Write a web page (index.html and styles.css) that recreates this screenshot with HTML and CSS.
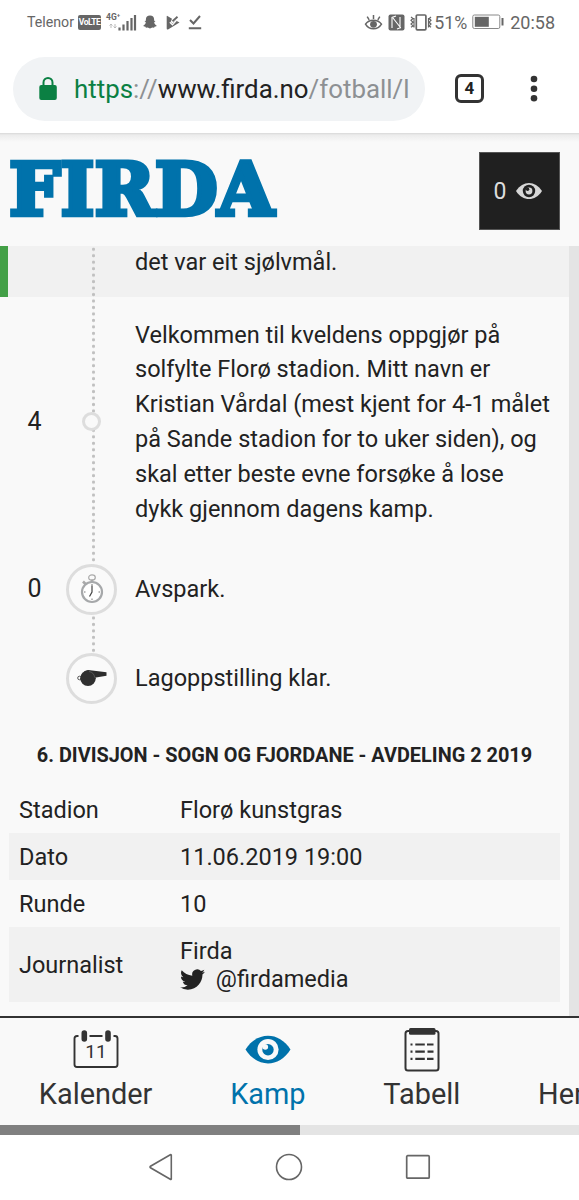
FILE: index.html
```html
<!DOCTYPE html>
<html lang="no">
<head>
    <meta charset="UTF-8">
    <meta name="viewport" content="width=device-width, initial-scale=1.0">
    <title>Firda - Kamp</title>
    <link rel="stylesheet" href="styles.css">
</head>
<body>
    <div class="status-bar">
        <span class="carrier">Telenor</span>
        <span class="volte">VoLTE</span>
        <svg class="signal" width="32" height="20" viewBox="0 0 32 20">
            <text x="0" y="8" class="net">4G⁺</text>
            <path d="M5 12v4M3.500 13.500L5 12l1.500 1.500M9 12v4M7.500 14.500L9 16l1.500-1.500" stroke="#bbb" fill="none"/>
            <path d="M13.500 15.500v3M17.500 12.500v6M21.500 9v9.500M25.500 6v12.500M29 3v15.500" stroke="#666" stroke-width="2.200" fill="none"/>
        </svg>
        <svg class="snap" width="14" height="14" viewBox="0 0 14 14">
            <path fill="#666" d="M7 .5c-2.600 0-4.100 1.700-4.100 3.700v1.600l-1.400.3 1.300 1.200C2.600 9 1.600 10 .4 10.400l.2.900 1.900.4.400 1 1.800-.1L7 13.600l2.300-1 1.800.1.400-1 1.900-.4.200-.9c-1.200-.4-2.200-1.400-2.400-3.100l1.300-1.200-1.400-.3V4.200C11.100 2.200 9.600.500 7 .5z"/>
        </svg>
        <svg class="play" width="14" height="15" viewBox="0 0 14 15">
            <path fill="#666" d="M1 .8l5 3-1.300 3.200 1.900 1.500L9.800 5.400 13.500 7.500 2 14.400c-.8.300-1.300 0-1.300-.8L.7 1.300z"/>
            <path d="M3.800 7.200l2.700 2.600 4-4.500" fill="none" stroke="#fff" stroke-width="1.200"/>
            <path d="M6.500 6.200L11.500 1.800" stroke="#666" stroke-width="1.800"/>
        </svg>
        <svg class="done" width="14" height="16" viewBox="0 0 14 16">
            <path d="M2 6l3.500 3.500L12 2M.8 14.300h12.400" fill="none" stroke="#666" stroke-width="2"/>
        </svg>
        <div class="status-right">
            <svg width="19" height="17" viewBox="0 0 19 17">
                <path d="M1.500 10.200C5 4.800 13.800 4.800 17.500 10.200 13.800 16.300 5 16.300 1.500 10.200z" fill="none" stroke="#666" stroke-width="1.500"/>
                <circle cx="9.500" cy="10.300" r="3.400" fill="#666"/>
                <path d="M9.500 1v4M3.200 2.600l2 3.200M15.800 2.600l-2 3.200" stroke="#666" stroke-width="1.500"/>
            </svg>
            <svg class="nfc" width="17" height="17" viewBox="0 0 17 17">
                <rect x=".5" y=".6" width="16" height="15.800" rx="2" fill="#666"/>
                <path d="M4 14V3.500L8 2M5 4l7 9V3M9 15l4-1.500" fill="none" stroke="#fff" stroke-width="1.100"/>
            </svg>
            <svg class="vibrate" width="22" height="17" viewBox="0 0 22 17">
                <rect x="6.300" y="1" width="9.600" height="14.800" rx="1" fill="none" stroke="#666" stroke-width="1.700"/>
                <path d="M1 3l2 1.500-2 1.800 2 1.900-2 1.800 2 1.900-2 1.400M4 4v9.500M18.500 4v9.500M21 3l-1.800 1.500L21 6.300l-1.800 1.900L21 10l-1.800 1.900L21 13.300" fill="none" stroke="#666" stroke-width="1.200"/>
            </svg>
            <span class="percent">51%</span>
            <svg class="battery" width="32" height="16" viewBox="0 0 32 16">
                <rect x=".8" y="1" width="27" height="13.500" rx="1.500" fill="none" stroke="#888"/>
                <rect x="2.800" y="2.800" width="14" height="10" fill="#666"/>
                <path d="M30.500 4v7.500" stroke="#666" stroke-width="2"/>
            </svg>
            <span class="clock">20:58</span>
        </div>
    </div>

    <div class="browser-bar">
        <div class="address">
            <svg width="20" height="24" viewBox="0 0 20 24">
                <rect x="1.300" y="8" width="17.500" height="15" rx="2" fill="#0b8043"/>
                <path d="M5.500 9V5.500a4.500 4.500 0 0 1 9 0V9" fill="none" stroke="#0b8043" stroke-width="2"/>
            </svg>
            <span class="url"><span class="scheme">https</span>://<span class="host">www.firda.no</span>/fotball/l</span>
        </div>
        <div class="tab-count">4</div>
        <svg class="menu" width="10" height="28" viewBox="0 0 10 28">
            <g fill="#333"><circle cx="5" cy="4" r="3.300"/><circle cx="5" cy="13.700" r="3.300"/><circle cx="5" cy="23.300" r="3.300"/></g>
        </svg>
    </div>

    <header class="site-header">
        <svg class="logo" width="270" height="64" viewBox="0 0 270 64">
            <text x="0" y="58" textLength="265" lengthAdjust="spacingAndGlyphs">FIRDA</text>
        </svg>
        <div class="watch">
            <span>0</span>
            <svg width="26" height="18" viewBox="0 0 46 30">
                <path fill="#d6d6d6" d="M0 15C12-4 34-4 46 15 34 34 12 34 0 15z"/>
                <circle cx="23" cy="15" r="11" fill="#202020"/>
                <circle cx="23" cy="15" r="6" fill="#d6d6d6"/>
                <circle cx="20.500" cy="12" r="3" fill="#202020"/>
            </svg>
        </div>
    </header>

    <main class="content">
        <div class="timeline">
            <div class="event highlight">
                <p>det var eit sjølvmål.</p>
            </div>
            <div class="event comment">
                <span class="minute">4</span>
                <span class="marker"><i class="dot"></i></span>
                <p>Velkommen til kveldens oppgjør på<br>solfylte Florø stadion. Mitt navn er<br>Kristian Vårdal (mest kjent for 4-1 målet<br>på Sande stadion for to uker siden), og<br>skal etter beste evne forsøke å lose<br>dykk gjennom dagens kamp.</p>
            </div>
            <div class="event kickoff">
                <span class="minute">0</span>
                <span class="marker"><i class="ring">
                    <svg width="28" height="34" viewBox="0 0 28 34">
                        <ellipse cx="14" cy="5.500" rx="3.300" ry="2.700" fill="none" stroke="#aaa" stroke-width="1.200"/>
                        <path d="M14 7.500V11M5 9.500l3 3" stroke="#aaa" stroke-width="2.600"/>
                        <circle cx="14" cy="20" r="10" fill="#fff" stroke="#a6a8aa" stroke-width="2.200"/>
                        <path d="M14 12v1.500M14 26.500V28M6 20h1.500M20.500 20H22" stroke="#777"/>
                        <path d="M14 13.500V20l-2.500 4.500" fill="none" stroke="#444" stroke-width="1.200"/>
                    </svg>
                </i></span>
                <p>Avspark.</p>
            </div>
            <div class="event lineup">
                <span class="minute"></span>
                <span class="marker"><i class="ring">
                    <svg width="32" height="20" viewBox="0 0 32 20">
                        <circle cx="3.500" cy="10" r="1.800" fill="none" stroke="#555"/>
                        <path d="M8 3.500l2.500-1L12 2l18.500 2.200v3.600L20 9.500 17 9z" fill="#2d2d2d"/>
                        <circle cx="12" cy="10.200" r="7.800" fill="#303030"/>
                        <path d="M13 3.500c3 .3 5.500 2.700 5.600 6" fill="none" stroke="#555"/>
                    </svg>
                </i></span>
                <p>Lagoppstilling klar.</p>
            </div>
        </div>

        <h2>6. DIVISJON - SOGN OG FJORDANE - AVDELING 2 2019</h2>

        <div class="facts">
            <div class="fact"><span>Stadion</span><span>Florø kunstgras</span></div>
            <div class="fact"><span>Dato</span><span>11.06.2019 19:00</span></div>
            <div class="fact"><span>Runde</span><span>10</span></div>
            <div class="fact journalist">
                <span>Journalist</span>
                <span>Firda<br>
                    <svg class="twitter" width="25" height="21" viewBox="0 2 24 20">
                        <path fill="#222" d="M23.950 4.570a10 10 0 0 1-2.820.77 4.960 4.960 0 0 0 2.160-2.720c-.95.550-2 .95-3.130 1.180a4.920 4.920 0 0 0-8.380 4.480C7.690 8.090 4.070 6.130 1.640 3.160a4.920 4.920 0 0 0 1.520 6.570 4.900 4.900 0 0 1-2.230-.61v.06a4.920 4.920 0 0 0 3.950 4.830 5 5 0 0 1-2.210.08 4.940 4.940 0 0 0 4.600 3.420A9.870 9.870 0 0 1 0 19.540a14 14 0 0 0 7.550 2.210c9.050 0 14-7.500 14-13.980 0-.21 0-.42-.02-.63a9.940 9.940 0 0 0 2.420-2.570z"/>
                    </svg>
                    <span class="handle">@firdamedia</span>
                </span>
            </div>
        </div>
    </main>

    <nav class="tabs">
        <div class="tab">
            <svg width="46" height="44" viewBox="0 0 46 44">
                <path d="M5.500 8H4Q1.500 8 1.500 10.500V36.500Q1.500 39 4 39H42Q44.500 39 44.500 36.500V10.500Q44.500 8 42 8H40.500M16.500 8H29.500" fill="none" stroke="#333" stroke-width="1.900"/>
                <path d="M11.300 5v6M35 5v6" stroke="#333" stroke-width="5.600" stroke-linecap="round"/>
                <text x="23" y="29.500" class="day">11</text>
            </svg>
            <span>Kalender</span>
        </div>
        <div class="tab active">
            <svg width="46" height="44" viewBox="0 0 46 44">
                <path fill="#0072ab" d="M.5 21.500C12 3 34 3 45.500 21.500 34 40 12 40 .5 21.500z"/>
                <circle cx="23" cy="21.500" r="10.600" fill="#f9f9f9"/>
                <circle cx="23" cy="21.700" r="5.700" fill="#0072ab"/>
                <circle cx="20.300" cy="19" r="2.800" fill="#f9f9f9"/>
            </svg>
            <span>Kamp</span>
        </div>
        <div class="tab">
            <svg width="46" height="44" viewBox="0 -1 46 44">
                <rect x="6.500" y="2" width="33" height="39.500" rx="2.500" fill="none" stroke="#333" stroke-width="2"/>
                <rect x="10" y="-1" width="26.500" height="6.800" rx="1.500" fill="#333"/>
                <path d="M11.500 15.500h2M16.300 15.500h9.500M28 15.500h6.500M11.500 22.700h2M16.300 22.700h9.500M28.500 22.700H34.500M11.500 29.800h2M16.300 29.800h9.500M28 29.800h6.500" stroke="#333" stroke-width="2.200"/>
            </svg>
            <span>Tabell</span>
        </div>
        <div class="tab">
            <span class="icon-space"></span>
            <span>Hendelser</span>
        </div>
    </nav>
    <div class="tab-scroll"><div class="thumb"></div></div>

    <div class="system-nav">
        <svg width="28" height="30" viewBox="0 0 28 30"><path d="M24.300 3v24q-.4.700-1 .3L3.500 15.800q-1-.8 0-1.600L23.300 2.700q.7-.3 1 .3z" fill="none" stroke="#666" stroke-width="1.600"/></svg>
        <svg width="28" height="28" viewBox="0 0 28 28"><circle cx="14" cy="14" r="12.500" fill="none" stroke="#666" stroke-width="1.600"/></svg>
        <svg width="28" height="28" viewBox="0 0 28 28"><rect x="2.700" y="2.700" width="22.500" height="22.500" rx="1" fill="none" stroke="#666" stroke-width="1.700"/></svg>
    </div>
</body>
</html>
```
FILE: styles.css
```css
/* Global Styles */
* {
    box-sizing: border-box;
}

body {
    font-family: Roboto, sans-serif;
    background-color: #fff;
    color: #222;
    margin: 0;
    width: 579px;
    height: 1200px;
    overflow: hidden;
}

svg {
    display: block;
    flex: none;
    overflow: visible;
}

/* Phone status bar */
.status-bar {
    display: flex;
    align-items: center;
    height: 44px;
    padding: 0 24px 0 27px;
    color: #666;
}

.carrier {
    font-size: 14.2px;
    width: 51px;
}

.volte {
    width: 23px;
    height: 15px;
    border-radius: 2px;
    background-color: #666;
    color: #fff;
    font-size: 8.5px;
    font-weight: bold;
    line-height: 15px;
    letter-spacing: -0.5px;
    text-align: center;
}

.signal {
    margin: 0 0 1px 5px;
}

.net {
    font-size: 8.5px;
    font-weight: bold;
    fill: #666;
}

.snap {
    margin-left: 5px;
}

.play {
    margin-left: 9px;
}

.done {
    margin-left: 8px;
}

.status-right {
    display: flex;
    align-items: center;
    margin-left: auto;
}

.nfc {
    margin-left: 5px;
}

.vibrate {
    margin-left: 5px;
}

.percent {
    font-size: 17.8px;
    margin-left: 2px;
}

.battery {
    margin: 0 6px 0 5px;
}

.clock {
    font-size: 18px;
}

/* Browser bar */
.browser-bar {
    display: flex;
    align-items: center;
    height: 89px;
    padding: 0 0 0 13px;
}

.address {
    display: flex;
    align-items: center;
    width: 412px;
    height: 64px;
    padding-left: 25px;
    border-radius: 32px;
    background-color: #f1f3f5;
}

.url {
    margin-left: 16px;
    font-size: 25.85px;
    white-space: nowrap;
    color: #8d9093;
}

.scheme {
    color: #0b8043;
}

.host {
    color: #222;
}

.tab-count {
    width: 29px;
    height: 29px;
    margin-left: 30px;
    border: 3px solid #333;
    border-radius: 6px;
    font-size: 17px;
    font-weight: bold;
    line-height: 23px;
    text-align: center;
}

.menu {
    margin-left: 45px;
}

/* Site header */
.site-header {
    display: flex;
    justify-content: space-between;
    height: 113px;
    padding: 19px 19px 0 9px;
    background: linear-gradient(#d8d8d8, #ececec 2px, #f9f9f9 9px);
}

.logo {
    margin-top: 5px;
}

.logo text {
    font-family: "DejaVu Serif", serif;
    font-size: 72px;
    font-weight: bold;
    fill: #0072ab;
    stroke: #0072ab;
    stroke-width: 4.5px;
}

.watch {
    display: flex;
    align-items: center;
    justify-content: center;
    gap: 10px;
    width: 81px;
    height: 78px;
    padding-right: 3px;
    border: 1px solid #555;
    background-color: #202020;
    color: #ddd;
    font-size: 23px;
}

/* Scrolling content */
.content {
    height: 770px;
    border-right: 10px solid #e4e4e4;
    background-color: #f9f9f9;
}

.timeline {
    position: relative;
}

.timeline::before {
    content: "";
    position: absolute;
    left: 91px;
    top: 0;
    width: 5px;
    height: 410px;
    background: radial-gradient(circle at 2.500px 3.250px, #c0c0c0 1.200px, transparent 2px) 0 0 / 5px 6.480px;
}

.event {
    display: flex;
    align-items: center;
    font-size: 23.52px;
    line-height: 34.8px;
}

.event p {
    margin: 0;
    white-space: nowrap;
}

.highlight {
    align-items: flex-start;
    height: 51px;
    padding-left: 127px;
    border-left: 8px solid #43a047;
    background-color: #f1f1f1;
}

.highlight p {
    margin-top: -1px;
}

.comment {
    height: 248px;
}

.comment p,
.comment .minute {
    padding-top: 2px;
}

.kickoff {
    height: 88px;
}

.lineup {
    height: 90px;
}

.minute {
    width: 69px;
    text-align: center;
    font-size: 25px;
}

.marker {
    display: flex;
    justify-content: center;
    width: 45px;
    margin-right: 21px;
    position: relative;
}

.dot {
    width: 19px;
    height: 19px;
    border: 3px solid #ddd;
    border-radius: 50%;
    background-color: #f9f9f9;
}

.ring {
    display: flex;
    flex: none;
    align-items: center;
    justify-content: center;
    width: 51px;
    height: 51px;
    border: 3px solid #ddd;
    border-radius: 50%;
    background-color: #fafafa;
}

h2 {
    margin: 21px 0 18px;
    font-size: 19.9px;
    line-height: 24px;
    text-align: center;
    white-space: nowrap;
}

/* Match facts */
.facts {
    margin: 0 9px;
}

.fact {
    display: grid;
    grid-template-columns: 161px 1fr;
    align-items: center;
    height: 47px;
    padding-left: 10px;
    font-size: 23.5px;
    line-height: 28px;
}

.fact:nth-child(even) {
    background-color: #f1f1f1;
}

.journalist {
    height: 75px;
}

.twitter {
    display: inline-block;
    vertical-align: -3px;
}

.handle {
    margin-left: 5px;
}

/* Bottom tabs */
.tabs {
    display: flex;
    height: 109px;
    border-top: 2px solid #333;
    background-color: #f9f9f9;
    overflow: hidden;
}

.tab {
    display: flex;
    flex: none;
    flex-direction: column;
    align-items: center;
    padding: 10px 39px 0 38.8px;
    color: #333;
    font-size: 28.9px;
    line-height: 44px;
}

.active {
    color: #0072ab;
}

.day {
    font-size: 19px;
    text-anchor: middle;
    fill: #333;
}

.icon-space {
    height: 44px;
}

.tab-scroll {
    height: 10px;
    background-color: #e4e4e4;
}

.thumb {
    width: 300px;
    height: 10px;
    background-color: #808080;
}

/* Android navigation */
.system-nav {
    display: flex;
    align-items: center;
    justify-content: center;
    gap: 100.5px;
    height: 65px;
    padding: 0 1px 1px 0;
}
```
